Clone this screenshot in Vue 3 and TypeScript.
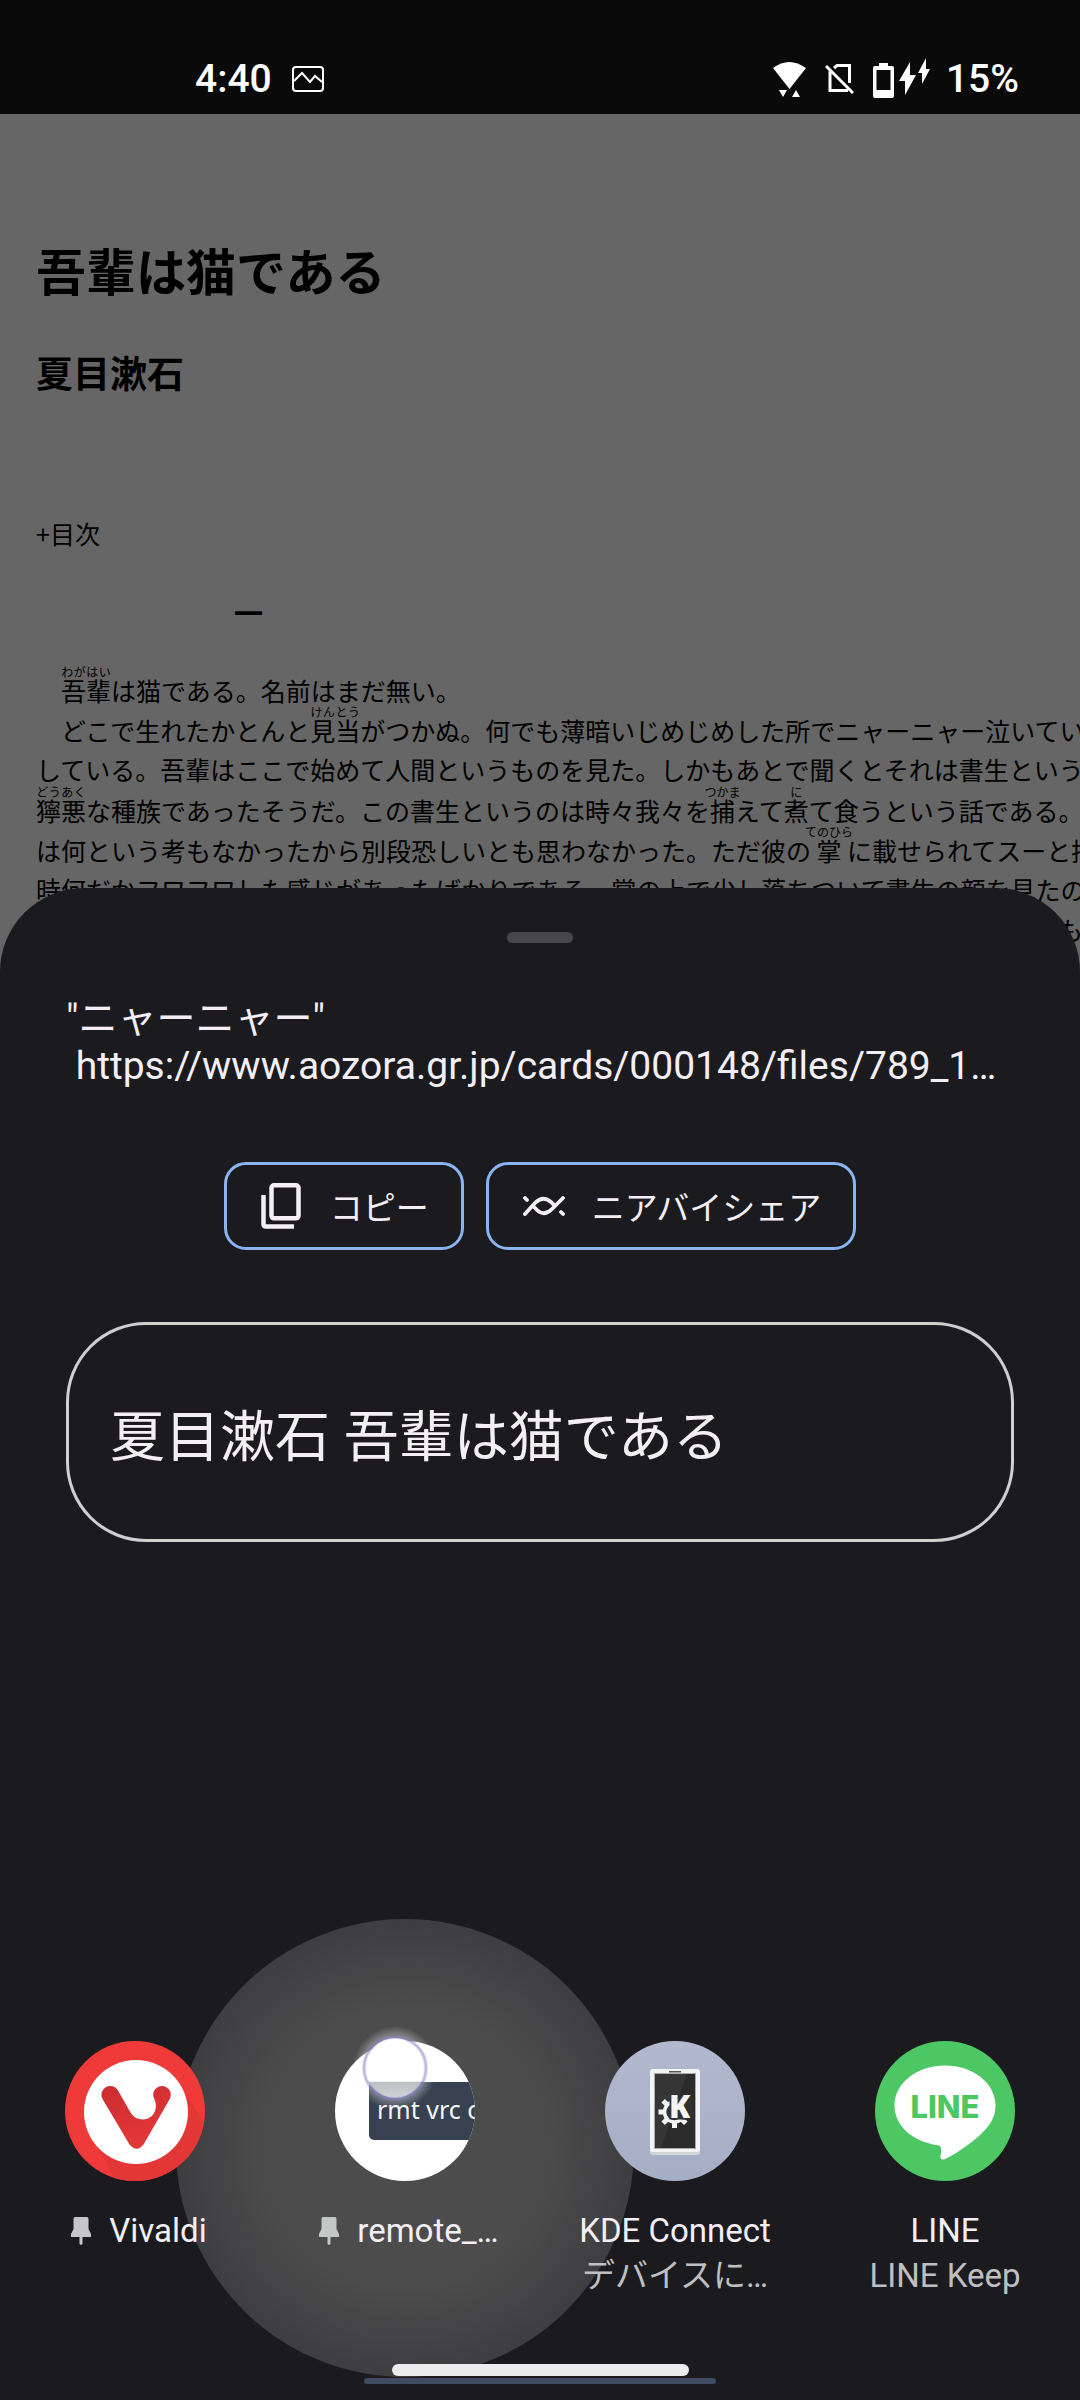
<script setup lang="ts">
interface Segment {
  text: string
  ruby?: string
}

type AppIcon = 'vivaldi' | 'remote' | 'kde' | 'line'

interface ShareTarget {
  icon: AppIcon
  name: string
  detail?: string
  pinned?: boolean
}

const lines: Segment[][] = [
  [{ text: '　' }, { text: '吾輩', ruby: 'わがはい' }, { text: 'は猫である。名前はまだ無い。' }],
  [
    { text: '　どこで生れたかとんと' },
    { text: '見当', ruby: 'けんとう' },
    { text: 'がつかぬ。何でも薄暗いじめじめした所でニャーニャー泣いていた事だけは記憶' },
  ],
  [{ text: 'している。吾輩はここで始めて人間というものを見た。しかもあとで聞くとそれは書生という人間中で一番' }],
  [
    { text: '獰悪', ruby: 'どうあく' },
    { text: 'な種族であったそうだ。この書生というのは時々我々を' },
    { text: '捕', ruby: 'つかま' },
    { text: 'えて' },
    { text: '煮', ruby: 'に' },
    { text: 'て食うという話である。しかしその当時' },
  ],
  [
    { text: 'は何という考もなかったから別段恐しいとも思わなかった。ただ彼の' },
    { text: '掌', ruby: 'てのひら' },
    { text: 'に載せられてスーと持ち上げられた' },
  ],
  [{ text: '時何だかフワフワした感じがあったばかりである。掌の上で少し落ちついて書生の顔を見たのがいわゆる人間' }],
  [{ text: 'というものの見始であろう。この時妙なものだと思った感じが今でも残っている。第一毛をもって装飾されべ' }],
]

const targets: ShareTarget[] = [
  { icon: 'vivaldi', name: 'Vivaldi', pinned: true },
  { icon: 'remote', name: 'remote_…', pinned: true },
  { icon: 'kde', name: 'KDE Connect', detail: 'デバイスに…' },
  { icon: 'line', name: 'LINE', detail: 'LINE Keep' },
]

const gearTeeth = [0, 45, 90, 135, 180, 225, 270, 315]
</script>

<template>
  <div class="screen">
    <header class="status">
      <span class="clock">4:40</span>
      <svg class="shot" width="32" height="26" viewBox="0 0 32 26" fill="none" stroke="#fff" stroke-width="2">
        <rect x="1" y="1" width="30" height="24" rx="3" />
        <path d="M2 15 10 7 18 16 23 10 30 16" />
      </svg>
      <div class="indicators">
        <svg width="33" height="36" viewBox="0 0 33 36" fill="#fff">
          <path d="M0 7Q16-5 33 7L16.500 28Z" />
          <path d="M6 29h8l-4 7ZM23 29l4 7h-8Z" />
        </svg>
        <svg width="29" height="32" viewBox="0 0 29 32" fill="none" stroke="#fff" stroke-width="3">
          <path d="M9 5 12 2.500H24.500V20M5 8V27.500H23M1 3 28 30" />
        </svg>
        <svg width="58" height="42" viewBox="0 0 58 42" fill="#fff">
          <path fill-rule="evenodd" d="M6 5h9v3h4q2 0 2 2v28q0 2-2 2H2q-2 0-2-2V10q0-2 2-2h4ZM3.500 12v20h14V12Z" />
          <path d="M37 4V17h6L32 37V23h-6ZM53 0v11h4L49 26V15h-4Z" />
        </svg>
        <span class="percent">15%</span>
      </div>
    </header>

    <main class="page">
      <h1>吾輩は猫である</h1>
      <h2>夏目漱石</h2>
      <p class="toc">+目次</p>
      <h3>一</h3>
      <div class="body-text">
        <p v-for="(line, i) in lines" :key="i">
          <template v-for="(seg, j) in line" :key="j">
            <ruby v-if="seg.ruby">{{ seg.text }}<rt>{{ seg.ruby }}</rt></ruby>
            <template v-else>{{ seg.text }}</template>
          </template>
        </p>
      </div>
    </main>

    <section class="sheet" aria-label="共有">
      <div class="handle"></div>
      <p class="shared">"ニャーニャー"</p>
      <p class="shared url">&nbsp;https://www.aozora.gr.jp/cards/000148/files/789_1…</p>

      <div class="actions">
        <button type="button" class="action">
          <svg width="42" height="46" viewBox="0 0 42 46" fill="none" stroke="#f3eff5" stroke-width="4.500">
            <rect x="10.500" y="2.300" width="27" height="33" rx="2.500" />
            <path d="M2.500 12V41q0 2.500 2.500 2.500H33" />
          </svg>
          <span>コピー</span>
        </button>
        <button type="button" class="action">
          <svg width="42" height="20" viewBox="0 0 42 20" fill="none" stroke="#f3eff5" stroke-width="3.800" stroke-linecap="round">
            <path d="M2 18 12 7Q20-1 28 6L31 9M11 11 14 14Q21 21 29 13L40 2M2 2 4 4M38 16 40 18" />
          </svg>
          <span>ニアバイシェア</span>
        </button>
      </div>

      <div class="card">夏目漱石 吾輩は猫である</div>

      <div class="apps">
        <button v-for="t in targets" :key="t.icon" type="button" class="app" :class="{ pressed: t.icon === 'remote' }">
          <svg v-if="t.icon === 'vivaldi'" class="icon" viewBox="0 0 140 140">
            <defs>
              <clipPath id="viv-clip"><circle cx="70" cy="70" r="70" /></clipPath>
              <linearGradient id="viv-v" x1="0" y1="0" x2="0.400" y2="1">
                <stop offset="0" stop-color="#cb2d30" />
                <stop offset="1" stop-color="#e43638" />
              </linearGradient>
            </defs>
            <g clip-path="url(#viv-clip)">
              <rect width="140" height="140" fill="#f03a3a" />
              <path d="M34 108 56 150H150V100L120 52Z" fill="#e33636" />
            </g>
            <circle cx="71" cy="71" r="52" fill="#fff" />
            <path
              d="M37.500 58A8.800 8.800 0 0 1 53 49.500L65.500 71.500C71 81 86 81 90 70Q92 64 89.500 58.500A8.800 8.800 0 1 1 105 57.500L78.500 103.500Q71.500 112 64.500 103.500Z"
              fill="url(#viv-v)"
            />
          </svg>

          <svg v-else-if="t.icon === 'remote'" class="icon" viewBox="0 0 140 140">
            <defs>
              <clipPath id="rmt-clip"><circle cx="70" cy="70" r="70" /></clipPath>
              <radialGradient id="touch-glow">
                <stop offset="0.700" stop-color="#fff" stop-opacity="0.800" />
                <stop offset="1" stop-color="#fff" stop-opacity="0" />
              </radialGradient>
              <linearGradient id="touch-fill" x1="0" y1="0" x2="0" y2="1">
                <stop offset="0.720" stop-color="#fff" />
                <stop offset="0.740" stop-color="#bcbfc2" />
                <stop offset="1" stop-color="#d2d3d5" />
              </linearGradient>
            </defs>
            <g clip-path="url(#rmt-clip)">
              <rect width="140" height="140" fill="#fff" />
              <rect x="34" y="41" width="130" height="58" rx="5" fill="#37414f" />
              <text x="42" y="78" class="rmt">rmt vrc c</text>
            </g>
            <circle cx="60" cy="27" r="42" fill="url(#touch-glow)" opacity="0.500" />
            <circle cx="60" cy="27" r="30" fill="url(#touch-fill)" />
            <circle cx="60" cy="27" r="31" fill="none" stroke="#7f80c8" stroke-opacity="0.250" stroke-width="4" />
            <circle cx="60" cy="27" r="31" fill="none" stroke="#7f80c8" stroke-opacity="0.400" stroke-width="2" />
          </svg>

          <svg v-else-if="t.icon === 'kde'" class="icon" viewBox="0 0 140 140">
            <defs>
              <linearGradient id="kde-bg" x1="0" y1="0" x2="0" y2="1">
                <stop offset="0" stop-color="#b2b9cf" />
                <stop offset="1" stop-color="#a5aec4" />
              </linearGradient>
            </defs>
            <circle cx="70" cy="70" r="70" fill="url(#kde-bg)" />
            <rect x="45" y="30" width="50" height="84" rx="3" fill="#d3d5d8" />
            <rect x="45" y="28" width="50" height="83" rx="3" fill="#f4f4f4" />
            <rect x="64" y="30" width="12" height="1.500" fill="#555" />
            <rect x="49" y="32" width="42" height="76" fill="#a9a9a9" />
            <rect x="50" y="33" width="40" height="74" fill="#2b2b2b" />
            <path d="M50 33H82L56 107H50Z" fill="#363636" />
            <g fill="#f4f4f4">
              <circle cx="69.500" cy="71" r="10" fill="none" stroke="#f4f4f4" stroke-width="3.500" />
              <rect v-for="a in gearTeeth" :key="a" x="67" y="82" width="5" height="5" :transform="`rotate(${a} 69.5 71)`" />
            </g>
            <path d="M64.500 53H88V76L82 79 76 78.500H64.500Z" fill="#303030" />
            <text x="64" y="77" class="kde-k">K</text>
          </svg>

          <svg v-else class="icon" viewBox="0 0 140 140">
            <circle cx="70" cy="70" r="70" fill="#4cc764" />
            <path
              d="M70 24.500C98 24.500 120.500 42 120.500 64.500C120.500 76 115 85 105 94C94 104 79 114 69 118.500Q64.500 119 65.500 114.500Q67.500 106 64 104.500C38 101 19.500 85 19.500 64.500C19.500 42 42 24.500 70 24.500Z"
              fill="#fff"
            />
            <text x="70" y="77" text-anchor="middle" class="line-word">LINE</text>
          </svg>

          <span class="name" :class="{ pinned: t.pinned }">
            <svg v-if="t.pinned" class="pin" width="20" height="28" viewBox="0 0 20 28" fill="#c4c7c5">
              <path d="M4 0H16Q17.500 0 17.500 2V12L20 17V20H11.500V27L10 28 8.500 27V20H0V17L2.500 12V2Q2.500 0 4 0Z" />
            </svg>
            {{ t.name }}
          </span>
          <span v-if="t.detail" class="detail">{{ t.detail }}</span>
        </button>
      </div>

      <div class="nav">
        <span class="nav-pill"></span>
        <span class="nav-track"></span>
      </div>
    </section>
  </div>
</template>

<style>
body {
  margin: 0;
}
</style>

<style scoped>
.screen {
  position: relative;
  min-height: 100vh;
  overflow: hidden;
  background: #666;
  font-family: Roboto, "Noto Sans CJK JP", sans-serif;
}

h1,
h2,
h3,
p {
  margin: 0;
}

.status {
  display: flex;
  align-items: center;
  box-sizing: border-box;
  height: 114px;
  padding: 43px 61px 0 195px;
  background: #0a0a0a;
  color: #fff;
  font-size: 39px;
  font-weight: 500;
}

.shot {
  margin-left: 20px;
}

.indicators {
  display: flex;
  align-items: center;
  gap: 19px;
  margin-left: auto;
}

.percent {
  margin-left: -4px;
}

.page {
  padding: 115px 0 0 36px;
  color: #000;
  font-family: "Noto Sans CJK JP", sans-serif;
  font-size: 25px;
  line-height: 40px;
  white-space: nowrap;
}

h1 {
  font-size: 50px;
  line-height: 80px;
}

h2 {
  margin-top: 33px;
  font-size: 37px;
  line-height: 60px;
}

.toc {
  margin-top: 111px;
}

h3 {
  margin: 36px 0 0 198px;
  font-size: 29px;
  line-height: 46px;
}

.body-text {
  margin-top: 31px;
}

/* The taller line box leaves room for the furigana, so every row keeps the same baseline. */
.body-text p {
  height: 40px;
  line-height: 46px;
}

rt {
  font-size: 12px;
  line-height: 12px;
}

.sheet {
  position: absolute;
  top: 37%;
  right: 0;
  bottom: 0;
  left: 0;
  display: flex;
  flex-direction: column;
  overflow: hidden;
  isolation: isolate;
  border-radius: 84px 84px 0 0;
  background: #1b1b1f;
  color: #f3eff5;
}

.handle {
  align-self: center;
  width: 66px;
  height: 11px;
  margin: 44px 0 53px;
  border-radius: 6px;
  background: #47464a;
}

.shared {
  padding: 0 66px;
  overflow: hidden;
  font-size: 39px;
  line-height: 47px;
  white-space: nowrap;
}

.actions {
  display: flex;
  justify-content: center;
  gap: 22px;
  margin: 72px 0;
}

.action {
  display: flex;
  align-items: center;
  gap: 27px;
  box-sizing: border-box;
  height: 88px;
  padding: 0 32px 0 34px;
  border: 3px solid #8ab4f0;
  border-radius: 22px;
  background: none;
  color: inherit;
  font: 33px Roboto, "Noto Sans CJK JP", sans-serif;
}

.card {
  display: flex;
  align-items: center;
  box-sizing: border-box;
  height: 220px;
  margin: 0 66px;
  padding: 0 41px;
  border: 3px solid #cfcfcf;
  border-radius: 80px;
  font-size: 55px;
}

.apps {
  display: grid;
  grid-template-columns: repeat(4, 1fr);
  margin-top: auto;
}

.app {
  position: relative;
  display: flex;
  flex-direction: column;
  align-items: center;
  height: 323px;
  padding: 0;
  border: 0;
  background: none;
  color: inherit;
  font: 33px/45px Roboto, "Noto Sans CJK JP", sans-serif;
  white-space: nowrap;
}

.app.pressed::before {
  position: absolute;
  top: 107px;
  left: 50%;
  z-index: -1;
  width: 458px;
  height: 458px;
  border-radius: 50%;
  background: radial-gradient(closest-side, #4c4c4d 60%, #3e3e40 100%);
  content: "";
  transform: translate(-50%, -50%);
}

.icon {
  width: 140px;
  height: 140px;
  margin-bottom: 27px;
  overflow: visible;
}

.rmt {
  fill: #f4f6f8;
  font-family: "Noto Sans", sans-serif;
  font-size: 25px;
}

.kde-k {
  fill: #f4f4f4;
  font-family: "Open Sans", sans-serif;
  font-size: 31px;
  font-weight: 800;
}

.line-word {
  fill: #4cc764;
  font-family: Inter, sans-serif;
  font-size: 31px;
  font-weight: 800;
}

.name {
  display: flex;
  align-items: center;
  gap: 18px;
}

.name.pinned {
  padding-left: 8px;
}

.detail {
  color: #bfbfc1;
}

.nav {
  display: flex;
  flex-direction: column;
  align-items: center;
  gap: 2px;
  padding-bottom: 16px;
}

.nav-pill {
  width: 297px;
  height: 12px;
  border-radius: 6px;
  background: #ececec;
}

.nav-track {
  width: 352px;
  height: 6px;
  border-radius: 3px;
  background: #3e4b63;
}
</style>
